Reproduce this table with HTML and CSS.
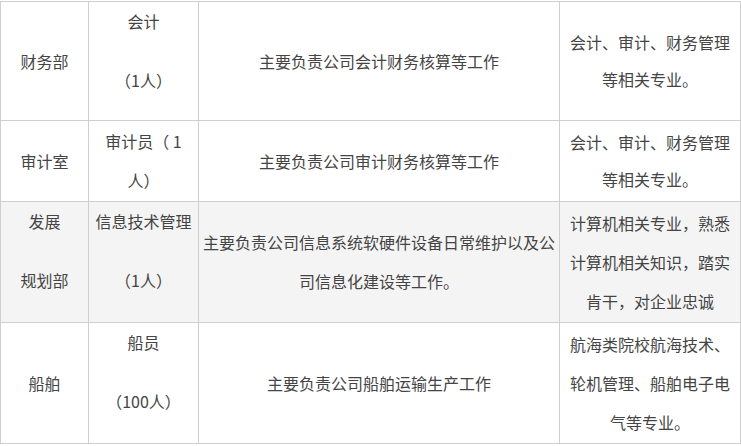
FILE: index.html
```html
<!DOCTYPE html>
<html lang="zh-CN">
<head>
<meta charset="utf-8">
<title>岗位表</title>
<link rel="stylesheet" href="styles.css">
</head>
<body>
<table class="jobs">
  <colgroup>
    <col class="c-dept">
    <col class="c-post">
    <col class="c-duty">
    <col class="c-req">
  </colgroup>
  <tbody>
    <tr class="row-a">
      <td>财务部</td>
      <td><div class="stack"><p>会计</p><p>（1人）</p></div></td>
      <td>主要负责公司会计财务核算等工作</td>
      <td class="tight">会计、审计、财务管理等相关专业。</td>
    </tr>
    <tr class="row-b">
      <td>审计室</td>
      <td>审计员（ 1<br>人）</td>
      <td>主要负责公司审计财务核算等工作</td>
      <td class="tight">会计、审计、财务管理等相关专业。</td>
    </tr>
    <tr class="row-c alt">
      <td><div class="stack"><p>发展</p><p>规划部</p></div></td>
      <td><div class="stack"><p>信息技术管理</p><p>（1人）</p></div></td>
      <td>主要负责公司信息系统软硬件设备日常维护以及公司信息化建设等工作。</td>
      <td>计算机相关专业，熟悉计算机相关知识，踏实肯干，对企业忠诚</td>
    </tr>
    <tr class="row-c">
      <td>船舶</td>
      <td><div class="stack"><p>船员</p><p>（100人）</p></div></td>
      <td>主要负责公司船舶运输生产工作</td>
      <td>航海类院校航海技术、轮机管理、船舶电子电气等专业。</td>
    </tr>
  </tbody>
</table>
</body>
</html>
```
FILE: styles.css
```css
html, body {
  margin: 0;
  padding: 0;
  background: #fff;
}

body {
  padding-top: 1px;
  font-family: "Noto Sans CJK SC", "Noto Sans", sans-serif;
  font-size: 16px;
  color: #444;
}

.jobs {
  border-collapse: collapse;
  table-layout: fixed;
  width: 740px;
}

.c-dept { width: 88px; }
.c-post { width: 110px; }
.c-duty { width: 361px; }
.c-req  { width: 181px; }

.jobs td {
  border: 1px solid #cfcfcf;
  padding: 0 3px;
  text-align: center;
  vertical-align: middle;
  line-height: 39px;
}

.row-a td { height: 118px; }
.row-b td { height: 80px; }
.row-c td { height: 120px; }

.alt td { background: #f4f4f4; }

.jobs td.tight { line-height: 37px; }

.stack p {
  margin: 0 0 20px;
}

.row-c .stack {
  margin-top: -3px;
}
```
